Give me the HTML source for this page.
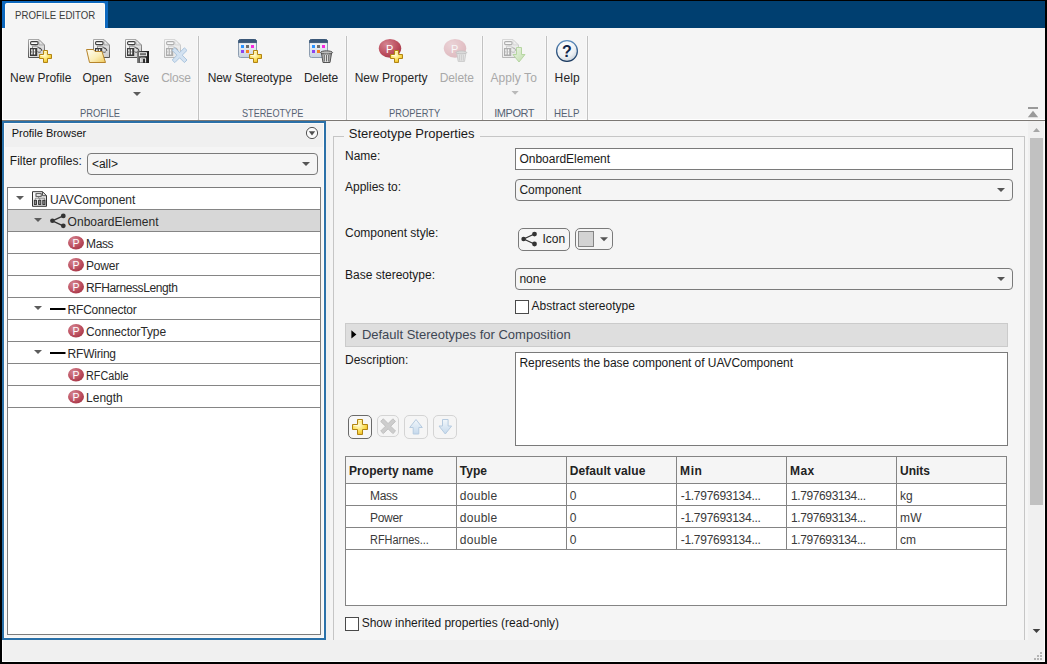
<!DOCTYPE html>
<html lang="en">
<head>
<meta charset="utf-8">
<title>Profile Editor</title>
<style>
html,body{margin:0;padding:0;}
body{width:1047px;height:664px;position:relative;overflow:hidden;background:#f0f0f0;font-family:"Liberation Sans",sans-serif;}
.a{position:absolute;box-sizing:border-box;}
.t{position:absolute;white-space:nowrap;font-family:"Liberation Sans",sans-serif;}
svg{position:absolute;overflow:visible;}
.sep{position:absolute;width:1px;top:36px;height:84px;background:#c2c2c2;box-shadow:-1px 0 #f9f9f9,1px 0 #f9f9f9;}
.row{position:absolute;left:8px;width:312px;height:1px;background:#858585;}
.combo{position:absolute;box-sizing:border-box;border:1px solid #7a7a7a;border-radius:4px;background:#f5f5f5;}
.hl{position:absolute;height:1px;background:#848484;}
.vl{position:absolute;width:1px;background:#848484;}
</style>
</head>
<body>
<!-- window frame -->
<div class="a" style="left:0;top:0;width:1047px;height:1px;background:#000"></div>
<div class="a" style="left:0;top:0;width:2px;height:664px;background:#000"></div>
<div class="a" style="left:1045px;top:0;width:2px;height:664px;background:#000"></div>
<div class="a" style="left:0;top:662px;width:1047px;height:2px;background:#000"></div>
<!-- title / tab bar -->
<div class="a" style="left:2px;top:1px;width:1043px;height:27px;background:#003f70"></div>
<div class="a" style="left:2px;top:1px;width:106px;height:27px;background:#0d68be"></div>
<div class="a" style="left:5px;top:3px;width:100px;height:25px;background:#f5f5f5;border:1px solid #fffdf8;border-bottom:none;border-radius:2px 2px 0 0"></div>
<!-- toolstrip -->
<div class="a" style="left:2px;top:28px;width:1043px;height:92px;background:#f5f5f5;border-left:1px solid #fff;border-bottom:1px solid #fff"></div>
<div class="a" style="left:2px;top:120px;width:1043px;height:1px;background:#7c7874"></div>
<div class="sep" style="left:198px"></div>
<div class="sep" style="left:346px"></div>
<div class="sep" style="left:482px"></div>
<div class="sep" style="left:546px"></div>
<div class="sep" style="left:587px"></div>
<!-- left panel -->
<div class="a" style="left:2px;top:121px;width:324px;height:519px;border:2px solid #2a70a8;background:#f5f5f5;box-shadow:inset 0 0 0 1px #fcfaf8"></div>
<div class="a" style="left:5px;top:124px;width:318px;height:23px;background:#f0f0f0"></div>
<div class="combo" style="left:87px;top:153px;width:231px;height:22px"></div>
<div class="a" style="left:7px;top:187px;width:314px;height:448px;background:#fff;border:1px solid #7c7c7c"></div>
<div class="a" style="left:8px;top:210px;width:312px;height:21px;background:#d7d7d7"></div>
<div class="row" style="top:209px"></div><div class="row" style="top:231px"></div><div class="row" style="top:253px"></div>
<div class="row" style="top:275px"></div><div class="row" style="top:297px"></div><div class="row" style="top:319px"></div>
<div class="row" style="top:341px"></div><div class="row" style="top:363px"></div><div class="row" style="top:385px"></div>
<div class="row" style="top:407px"></div>
<!-- right panel -->
<div class="a" style="left:330px;top:121px;width:715px;height:519px;background:#f5f5f5"></div>
<div class="a" style="left:1028px;top:121px;width:17px;height:519px;background:#f0f0f0;border-right:1px solid #fdfdfd"></div>
<div class="a" style="left:1030px;top:138px;width:13px;height:367px;background:#c1c1c1"></div>
<!-- group box -->
<div class="a" style="left:333px;top:136px;width:692px;height:520px;border:1px solid #c6c6c6;border-bottom:none"></div>
<div class="a" style="left:344px;top:130px;width:136px;height:12px;background:#f5f5f5"></div>
<div class="a" style="left:330px;top:640px;width:715px;height:22px;background:#f0f0f0"></div>
<!-- inputs -->
<div class="a" style="left:515px;top:148px;width:498px;height:22px;background:#fff;border:1px solid #7a7a7a"></div>
<div class="combo" style="left:515px;top:179px;width:498px;height:22px"></div>
<div class="combo" style="left:518px;top:228px;width:52px;height:23px;border-radius:5px"></div>
<div class="combo" style="left:575px;top:228px;width:38px;height:22px;border-radius:5px"></div>
<div class="a" style="left:578px;top:231px;width:16px;height:16px;background:#d3d3d3;border:1px solid #858585"></div>
<div class="combo" style="left:515px;top:268px;width:498px;height:22px"></div>
<div class="a" style="left:515px;top:300px;width:14px;height:14px;background:#fff;border:1px solid #4a4a4a"></div>
<div class="a" style="left:345px;top:323px;width:663px;height:24px;background:#dedede;border:1px solid #cbcbcb"></div>
<div class="a" style="left:515px;top:352px;width:493px;height:94px;background:#fff;border:1px solid #7a7a7a"></div>
<!-- small buttons -->
<div class="combo" style="left:348px;top:415px;width:24px;height:24px;border-color:#6a6a6a;border-radius:5px;background:#f7f7f7"></div>
<div class="combo" style="left:377px;top:415px;width:22px;height:22px;border-color:#d4d4d4;border-radius:5px"></div>
<div class="combo" style="left:404px;top:415px;width:24px;height:24px;border-color:#d4d4d4;border-radius:5px"></div>
<div class="combo" style="left:433px;top:415px;width:24px;height:24px;border-color:#d4d4d4;border-radius:5px"></div>
<!-- table -->
<div class="a" style="left:345px;top:456px;width:662px;height:150px;background:#fff;border:1px solid #848484"></div>
<div class="a" style="left:346px;top:457px;width:660px;height:26px;background:#f5f5f5"></div>
<div class="hl" style="left:346px;width:660px;top:483px"></div>
<div class="hl" style="left:346px;width:660px;top:505px"></div>
<div class="hl" style="left:346px;width:660px;top:527px"></div>
<div class="hl" style="left:346px;width:660px;top:549px"></div>
<div class="vl" style="left:456px;top:457px;height:93px"></div>
<div class="vl" style="left:566px;top:457px;height:93px"></div>
<div class="vl" style="left:676px;top:457px;height:93px"></div>
<div class="vl" style="left:786px;top:457px;height:93px"></div>
<div class="vl" style="left:896px;top:457px;height:93px"></div>
<div class="a" style="left:345px;top:617px;width:14px;height:14px;background:#fff;border:1px solid #4a4a4a"></div>
<div class="a" style="left:2px;top:661px;width:1043px;height:1px;background:#fcfcfc"></div>
<div class="a" style="left:1044px;top:121px;width:1px;height:541px;background:#fcfcfc"></div>
<div class="a" style="left:2px;top:640px;width:1px;height:22px;background:#fcfcfc"></div>
<svg width="1047" height="664" viewBox="0 0 1047 664" style="left:0;top:0">
<defs>
<linearGradient id="gdoc" x1="0" y1="0" x2="1" y2="1"><stop offset="0" stop-color="#fdfdfd"/><stop offset="1" stop-color="#c9c9c9"/></linearGradient>
<linearGradient id="gdocs" x1="0" y1="0" x2="0" y2="1"><stop offset="0" stop-color="#a8a8a8"/><stop offset="1" stop-color="#555"/></linearGradient>
<linearGradient id="gfoldc" x1="0" y1="0" x2="0" y2="1"><stop offset="0" stop-color="#ffffff"/><stop offset="1" stop-color="#d2d2d2"/></linearGradient>
<linearGradient id="gflop" x1="0" y1="0" x2="1" y2="0"><stop offset="0" stop-color="#8a8a8a"/><stop offset="0.35" stop-color="#3a3a3a"/><stop offset="1" stop-color="#1c1c1c"/></linearGradient>
<radialGradient id="gplusr" cx="0.42" cy="0.38" r="0.75"><stop offset="0" stop-color="#fffbd8"/><stop offset="0.55" stop-color="#fbdf55"/><stop offset="1" stop-color="#e7a50e"/></radialGradient>
<linearGradient id="ggreen" x1="0" y1="0" x2="1" y2="1"><stop offset="0" stop-color="#eef6e8"/><stop offset="1" stop-color="#bfdcab"/></linearGradient>
<linearGradient id="ghs" x1="0" y1="0" x2="0" y2="1"><stop offset="0" stop-color="#5f8fc0"/><stop offset="1" stop-color="#17365c"/></linearGradient>
<linearGradient id="gdoc2" x1="0" y1="0" x2="1" y2="1"><stop offset="0" stop-color="#ffffff"/><stop offset="1" stop-color="#d8d8d8"/></linearGradient>
<linearGradient id="gplus" x1="0" y1="0" x2="0" y2="1"><stop offset="0" stop-color="#fff8c0"/><stop offset="0.5" stop-color="#fbe15a"/><stop offset="1" stop-color="#eeb312"/></linearGradient>
<linearGradient id="gfold" x1="0" y1="0" x2="1" y2="1"><stop offset="0" stop-color="#fffef4"/><stop offset="0.55" stop-color="#fbeeb8"/><stop offset="1" stop-color="#efc95a"/></linearGradient>
<linearGradient id="gwin" x1="0" y1="0" x2="0" y2="1"><stop offset="0" stop-color="#ffffff"/><stop offset="1" stop-color="#c7d2df"/></linearGradient>
<radialGradient id="gred" cx="0.35" cy="0.3" r="0.8"><stop offset="0" stop-color="#d48692"/><stop offset="0.6" stop-color="#bd5060"/><stop offset="1" stop-color="#a23344"/></radialGradient>
<radialGradient id="ghelp" cx="0.4" cy="0.3" r="0.8"><stop offset="0" stop-color="#ffffff"/><stop offset="0.6" stop-color="#eef1f4"/><stop offset="1" stop-color="#bcc6d0"/></radialGradient>
<linearGradient id="gtrash" x1="0" y1="0" x2="1" y2="0"><stop offset="0" stop-color="#9a9a9a"/><stop offset="0.5" stop-color="#f2f2f2"/><stop offset="1" stop-color="#8a8a8a"/></linearGradient>
<linearGradient id="garr" x1="0" y1="0" x2="0" y2="1"><stop offset="0" stop-color="#f2f7fb"/><stop offset="1" stop-color="#c5d9ec"/></linearGradient>
<g id="pdoc">
 <path d="M0.5 0.5H11L16.5 6V18.5H0.5Z" fill="url(#gdoc)" stroke="url(#gdocs)"/>
 <path d="M11 0.8V6H16.2Z" fill="url(#gfoldc)" stroke="#9a9a9a" stroke-width="0.7" stroke-linejoin="round"/>
 <rect x="2.6" y="2.6" width="7.4" height="3" rx="1" fill="#fff" stroke="#3e3e3e" stroke-width="1.1"/>
 <path d="M7.2 6v1M4.5 9V7.2H10.5" stroke="#8a8a8a" fill="none" stroke-width="0.9"/>
 <rect x="2" y="9" width="7.2" height="8" fill="#3a3a3a"/>
 <path d="M3.9 10.3v5.3M6.5 10.3v5.3" stroke="#fff" fill="none" stroke-width="1.4"/>
 <path d="M3 12.95h1.2M5.6 12.95h1.2" stroke="#3a3a3a" fill="none" stroke-width="0.7"/>
 <path d="M9.6 9.2c1.6-0.9 3.4 0.3 4.2 2.6" stroke="#444" fill="none" stroke-width="1.5"/>
 <path d="M10 9.6c1.4-0.4 2.6 0.5 3.2 2.2" stroke="#fff" fill="none" stroke-width="0.7" stroke-dasharray="1.2 0.8"/>
 <path d="M9.5 12.6c1 0.9 2.3 0.9 3.3 0.2" stroke="#555" fill="none" stroke-width="1"/>
</g>
<g id="plus13">
 <path d="M4.5 0.5H8.5V4.5H12.5V8.5H8.5V12.5H4.5V8.5H0.5V4.5H4.5Z" fill="url(#gplusr)" stroke="#b08414" stroke-linejoin="round"/>
 <path d="M5.5 1.6H7.4M1.6 5.5H4.6" stroke="#fffde0" fill="none"/>
</g>
<g id="win19">
 <rect x="0.5" y="0.5" width="18" height="18" rx="2" fill="url(#gwin)" stroke="#8d9db0"/>
 <path d="M0.5 3.6V2.5a2 2 0 0 1 2-2h14a2 2 0 0 1 2 2V3.6Z" fill="#3b5878" stroke="#3b5878"/>
 <rect x="3" y="6" width="3" height="3" fill="#2a92ff"/>
 <rect x="8" y="6" width="3" height="3" fill="#6e6e6e"/>
 <rect x="13" y="6" width="3" height="3" fill="#f52ae0"/>
 <rect x="3" y="11" width="3" height="3" fill="#8c44f0"/>
 <rect x="8" y="11" width="3" height="3" fill="#f5821f"/>
</g>
<g id="trash">
 <path d="M1.5 4.5L3 13.5H10L11.5 4.5Z" fill="url(#gtrash)" stroke="#555"/>
 <path d="M0.5 3.8C0.5 1.2 12.5 1.2 12.5 3.8C12.5 5.4 0.5 5.4 0.5 3.8Z" fill="#bdbdbd" stroke="#4e4e4e"/>
 <path d="M4.3 6v6.5M6.5 6v6.5M8.7 6v6.5" stroke="#5a5a5a" stroke-width="0.9" fill="none"/>
</g>
<g id="share">
 <path d="M2.6 7.6L13.4 2.6M2.6 7.6L13.4 12.6" stroke="#333" stroke-width="1.3" fill="none"/>
 <circle cx="2.6" cy="7.6" r="2.3" fill="#333"/><circle cx="13.5" cy="2.7" r="2.4" fill="#333"/><circle cx="13.5" cy="12.6" r="2.4" fill="#333"/>
</g>
<g id="pico">
 <ellipse cx="8" cy="6.8" rx="8" ry="6.8" fill="url(#gred)"/>
 <text x="8.1" y="10.6" font-family="Liberation Sans, sans-serif" font-size="10.5" fill="#fff" text-anchor="middle">P</text>
</g>
<path id="dn8" d="M0 0H8L4 4Z"/>
</defs>

<!-- New Profile -->
<use href="#pdoc" x="28" y="39"/>
<use href="#plus13" x="39" y="50"/>
<!-- Open -->
<use href="#pdoc" x="93" y="39"/>
<path d="M86.5 49.5H93.5L95 51.5H102L105.5 62.5H89.5Z" fill="url(#gfold)" stroke="#b6842c" stroke-linejoin="round"/>
<!-- Save -->
<use href="#pdoc" x="125" y="39"/>
<g transform="translate(137,51)">
 <rect x="0" y="0" width="12" height="12" fill="url(#gflop)"/>
 <rect x="2.5" y="1.7" width="7" height="3" fill="#6e6e6e" stroke="#f2f2f2" stroke-width="0.9"/>
 <path d="M3.6 11.5V7.1H8.6V11.5" fill="none" stroke="#f4f4f4" stroke-width="1"/>
 <rect x="4.2" y="7.7" width="1.6" height="3.8" fill="#f4f4f4"/>
</g>
<!-- Close (disabled) -->
<g opacity="0.38"><use href="#pdoc" x="164" y="39"/></g>
<g transform="translate(172,47)">
 <path d="M2.8 0.8L7.6 5.6L12.4 0.8L15 3.4L10.2 8.2L15 13L12.4 15.6L7.6 10.8L2.8 15.6L0.2 13L5 8.2L0.2 3.4Z" fill="#d3e2f1" stroke="#abc5de" stroke-linejoin="round"/>
</g>
<!-- New Stereotype -->
<use href="#win19" x="238" y="39"/>
<use href="#plus13" x="249" y="50"/>
<!-- Delete stereotype -->
<use href="#win19" x="309" y="39"/>
<use href="#trash" x="320" y="49"/>
<!-- New Property -->
<ellipse cx="390" cy="48.3" rx="11.2" ry="9.4" fill="url(#gred)"/>
<text x="389.6" y="52.6" font-family="Liberation Sans, sans-serif" font-size="11" fill="#fff" text-anchor="middle">P</text>
<use href="#plus13" x="390" y="50"/>
<!-- Delete property (disabled) -->
<g opacity="0.3">
<ellipse cx="455" cy="48.3" rx="11.2" ry="9.4" fill="url(#gred)"/>
<text x="454.6" y="52.6" font-family="Liberation Sans, sans-serif" font-size="11" fill="#fff" text-anchor="middle">P</text>
</g>
<g transform="translate(455.5,49.3) scale(0.9)">
 <path d="M1.5 4.5L3 13.5H10L11.5 4.5Z" fill="#e4e4e4" stroke="#c9c9c9"/>
 <path d="M0.5 3.8C0.5 1.2 12.5 1.2 12.5 3.8C12.5 5.4 0.5 5.4 0.5 3.8Z" fill="#dadada" stroke="#c2c2c2"/>
 <path d="M4.3 6v6.5M6.5 6v6.5M8.7 6v6.5" stroke="#c6c6c6" stroke-width="0.9" fill="none"/>
</g>
<!-- Apply To (disabled) -->
<g opacity="0.38"><use href="#pdoc" x="502" y="39"/></g>
<path d="M516.5 47.5H521.5V54.5H525L519 62L513 54.5H516.5Z" fill="url(#ggreen)" stroke="#b6d6a2" stroke-linejoin="round"/>
<!-- Help -->
<circle cx="567" cy="51" r="10.4" fill="url(#ghelp)" stroke="url(#ghs)" stroke-width="1.3"/>
<text x="567" y="56.6" font-family="Liberation Sans, sans-serif" font-size="16" font-weight="700" fill="#13264a" text-anchor="middle">?</text>
<!-- dropdown arrows under Save / Apply To -->
<use href="#dn8" x="133" y="92" fill="#5c5c5c"/>
<path d="M511.5 91H518.7L515.1 94.8Z" fill="#b9b9b9"/>
<!-- collapse toolstrip -->
<rect x="1028" y="107" width="10" height="2" fill="#9a9a9a"/>
<path d="M1027.8 117.2H1038.2L1033 110.8Z" fill="#9a9a9a"/>
<!-- panel header menu -->
<circle cx="312" cy="133" r="5.6" fill="#fafafa" stroke="#555" stroke-width="1"/>
<path d="M308.8 131.2H315.2L312 135.4Z" fill="#505050"/>
<!-- combo arrows -->
<use href="#dn8" x="302" y="162" fill="#555"/>
<use href="#dn8" x="997" y="188" fill="#555"/>
<use href="#dn8" x="997" y="277" fill="#555"/>
<use href="#dn8" x="600" y="237.3" fill="#555"/>
<!-- tree -->
<use href="#dn8" x="16" y="196" fill="#5c5c5c"/>
<use href="#dn8" x="34" y="218" fill="#5c5c5c"/>
<use href="#dn8" x="34" y="306" fill="#5c5c5c"/>
<use href="#dn8" x="34" y="350" fill="#5c5c5c"/>
<g transform="translate(32,191.2)">
 <path d="M0.5 0.5H10.5L14.5 4.5V15.1H0.5Z" fill="url(#gdoc2)" stroke="#333"/>
 <path d="M10.5 0.5V4.5H14.5" fill="none" stroke="#444" stroke-width="0.9"/>
 <rect x="4" y="2.5" width="5.2" height="2.6" fill="#fff" stroke="#3a3a3a" stroke-width="0.9"/>
 <path d="M6.6 5.4v1.6M3.3 8.6V7H12.6V8.6M7.7 7V8.6" stroke="#777" fill="none" stroke-width="0.8"/>
 <rect x="2.3" y="9.1" width="2.2" height="4.2" fill="#8a8a8a" stroke="#2e2e2e" stroke-width="0.9"/>
 <rect x="6.6" y="9.1" width="2.2" height="4.2" fill="#8a8a8a" stroke="#2e2e2e" stroke-width="0.9"/>
 <rect x="10.8" y="9.1" width="2.2" height="4.2" fill="#8a8a8a" stroke="#2e2e2e" stroke-width="0.9"/>
</g>
<use href="#share" x="49.8" y="213.2"/>
<use href="#pico" x="68" y="236"/>
<use href="#pico" x="68" y="258"/>
<use href="#pico" x="68" y="280"/>
<use href="#pico" x="68" y="324"/>
<use href="#pico" x="68" y="368"/>
<use href="#pico" x="68" y="390"/>
<rect x="50" y="308" width="15.5" height="2" fill="#000"/>
<rect x="50" y="352" width="15.5" height="2" fill="#000"/>
<!-- icon button -->
<use href="#share" x="521" y="231.4"/>
<!-- section arrow -->
<path d="M351.4 330.2V338.6L356.4 334.4Z" fill="#000"/>
<!-- small buttons -->
<g transform="translate(352,419)">
 <path d="M5.5 0.5H10.5V5.5H15.5V10.5H10.5V15.5H5.5V10.5H0.5V5.5H5.5Z" fill="url(#gplusr)" stroke="#b08414" stroke-linejoin="round"/>
 <path d="M6.6 1.7H9.4M1.7 6.6H5.6" stroke="#fffde0" fill="none"/>
</g>
<g transform="translate(380.5,418.4)">
 <path d="M2.8 0.4L7.6 5.2L12.4 0.4L15 3L10.2 7.8L15 12.6L12.4 15.2L7.6 10.4L2.8 15.2L0.2 12.6L5 7.8L0.2 3Z" fill="#cdcdcd" stroke="#c0c0c0" stroke-linejoin="round"/>
</g>
<path d="M416 419.5L422.3 427.5H418.8V434H413.2V427.5H409.7Z" fill="url(#garr)" stroke="#b6cbe0" stroke-linejoin="round"/>
<path d="M445.3 434L451.6 426H448.1V419.5H442.5V426H439Z" fill="url(#garr)" stroke="#b6cbe0" stroke-linejoin="round"/>
<!-- scrollbar arrows -->
<path d="M1033 132H1040L1036.5 128Z" fill="#a6a6a6"/>
<path d="M1032.7 629H1040.3L1036.5 633Z" fill="#404040"/>
<!-- resize grip -->
<g fill="#b4b4b4">
<rect x="1040" y="652" width="2" height="2"/>
<rect x="1037" y="655" width="2" height="2"/><rect x="1040" y="655" width="2" height="2"/>
<rect x="1034" y="658" width="2" height="2"/><rect x="1037" y="658" width="2" height="2"/><rect x="1040" y="658" width="2" height="2"/>
</g>
</svg>

<span class="t" id="t0" style="left:15.00px;top:8px;font-size:11px;line-height:14px;color:#3b3b3b;transform:scaleX(0.8767);transform-origin:0 0;">PROFILE EDITOR</span>
<span class="t" id="t1" style="left:10.10px;top:70px;font-size:12px;line-height:16px;color:#262626;">New Profile</span>
<span class="t" id="t2" style="left:82.40px;top:70px;font-size:12px;line-height:16px;color:#262626;letter-spacing:0.085px;">Open</span>
<span class="t" id="t3" style="left:123.90px;top:70px;font-size:12px;line-height:16px;color:#262626;transform:scaleX(0.9211);transform-origin:0 0;">Save</span>
<span class="t" id="t4" style="left:161.20px;top:70px;font-size:12px;line-height:16px;color:#a9a9a9;letter-spacing:-0.258px;">Close</span>
<span class="t" id="t5" style="left:207.70px;top:70px;font-size:12px;line-height:16px;color:#262626;letter-spacing:-0.078px;">New Stereotype</span>
<span class="t" id="t6" style="left:304.00px;top:70px;font-size:12px;line-height:16px;color:#262626;letter-spacing:-0.098px;">Delete</span>
<span class="t" id="t7" style="left:354.70px;top:70px;font-size:12px;line-height:16px;color:#262626;letter-spacing:0.016px;">New Property</span>
<span class="t" id="t8" style="left:439.70px;top:70px;font-size:12px;line-height:16px;color:#a9a9a9;letter-spacing:-0.098px;">Delete</span>
<span class="t" id="t9" style="left:490.40px;top:70px;font-size:12px;line-height:16px;color:#a9a9a9;letter-spacing:0.086px;">Apply To</span>
<span class="t" id="t10" style="left:554.60px;top:70px;font-size:12px;line-height:16px;color:#262626;letter-spacing:0.153px;">Help</span>
<span class="t" id="t11" style="left:80.30px;top:106px;font-size:11px;line-height:14px;color:#556273;transform:scaleX(0.8518);transform-origin:0 0;">PROFILE</span>
<span class="t" id="t12" style="left:242.10px;top:106px;font-size:11px;line-height:14px;color:#556273;transform:scaleX(0.8301);transform-origin:0 0;">STEREOTYPE</span>
<span class="t" id="t13" style="left:388.80px;top:106px;font-size:11px;line-height:14px;color:#556273;transform:scaleX(0.8473);transform-origin:0 0;">PROPERTY</span>
<span class="t" id="t14" style="left:494.20px;top:106px;font-size:11px;line-height:14px;color:#556273;letter-spacing:-0.446px;">IMPORT</span>
<span class="t" id="t15" style="left:554.40px;top:106px;font-size:11px;line-height:14px;color:#556273;transform:scaleX(0.8870);transform-origin:0 0;">HELP</span>
<span class="t" id="t16" style="left:11.70px;top:126px;font-size:11px;line-height:14px;color:#111;letter-spacing:-0.005px;">Profile Browser</span>
<span class="t" id="t17" style="left:9.80px;top:153px;font-size:12px;line-height:16px;color:#1a1a1a;">Filter profiles:</span>
<span class="t" id="t18" style="left:91.90px;top:156px;font-size:12px;line-height:16px;color:#1a1a1a;">&lt;all&gt;</span>
<span class="t" id="t19" style="left:50.10px;top:192px;font-size:12px;line-height:16px;color:#2a2a2a;letter-spacing:-0.061px;">UAVComponent</span>
<span class="t" id="t20" style="left:67.60px;top:214px;font-size:12px;line-height:16px;color:#2a2a2a;letter-spacing:0.019px;">OnboardElement</span>
<span class="t" id="t21" style="left:86.00px;top:236px;font-size:12px;line-height:16px;color:#2a2a2a;letter-spacing:-0.368px;">Mass</span>
<span class="t" id="t22" style="left:86.00px;top:258px;font-size:12px;line-height:16px;color:#2a2a2a;letter-spacing:-0.203px;">Power</span>
<span class="t" id="t23" style="left:86.00px;top:280px;font-size:12px;line-height:16px;color:#2a2a2a;letter-spacing:-0.386px;">RFHarnessLength</span>
<span class="t" id="t24" style="left:67.60px;top:302px;font-size:12px;line-height:16px;color:#2a2a2a;letter-spacing:-0.216px;">RFConnector</span>
<span class="t" id="t25" style="left:86.00px;top:324px;font-size:12px;line-height:16px;color:#2a2a2a;letter-spacing:-0.107px;">ConnectorType</span>
<span class="t" id="t26" style="left:67.60px;top:346px;font-size:12px;line-height:16px;color:#2a2a2a;letter-spacing:-0.225px;">RFWiring</span>
<span class="t" id="t27" style="left:86.00px;top:368px;font-size:12px;line-height:16px;color:#2a2a2a;transform:scaleX(0.8995);transform-origin:0 0;">RFCable</span>
<span class="t" id="t28" style="left:86.00px;top:390px;font-size:12px;line-height:16px;color:#2a2a2a;letter-spacing:0.016px;">Length</span>
<span class="t" id="t29" style="left:348.80px;top:125px;font-size:13px;line-height:17px;color:#1a1a1a;">Stereotype Properties</span>
<span class="t" id="t30" style="left:345.00px;top:148px;font-size:12px;line-height:16px;color:#1a1a1a;">Name:</span>
<span class="t" id="t31" style="left:345.00px;top:179px;font-size:12px;line-height:16px;color:#1a1a1a;">Applies to:</span>
<span class="t" id="t32" style="left:345.00px;top:225px;font-size:12px;line-height:16px;color:#1a1a1a;">Component style:</span>
<span class="t" id="t33" style="left:345.00px;top:267px;font-size:12px;line-height:16px;color:#1a1a1a;">Base stereotype:</span>
<span class="t" id="t34" style="left:345.00px;top:352px;font-size:12px;line-height:16px;color:#1a1a1a;">Description:</span>
<span class="t" id="t35" style="left:519.40px;top:151px;font-size:12px;line-height:16px;color:#1a1a1a;">OnboardElement</span>
<span class="t" id="t36" style="left:519.40px;top:182px;font-size:12px;line-height:16px;color:#1a1a1a;">Component</span>
<span class="t" id="t37" style="left:542.40px;top:231px;font-size:12px;line-height:16px;color:#1a1a1a;">Icon</span>
<span class="t" id="t38" style="left:519.40px;top:271px;font-size:12px;line-height:16px;color:#1a1a1a;">none</span>
<span class="t" id="t39" style="left:531.50px;top:298px;font-size:12px;line-height:16px;color:#1a1a1a;">Abstract stereotype</span>
<span class="t" id="t40" style="left:361.90px;top:326px;font-size:13px;line-height:17px;color:#3d4654;">Default Stereotypes for Composition</span>
<span class="t" id="t41" style="left:519.40px;top:355px;font-size:12px;line-height:16px;color:#1a1a1a;letter-spacing:-0.052px;">Represents the base component of UAVComponent</span>
<span class="t" id="t42" style="left:361.70px;top:615px;font-size:12px;line-height:16px;color:#1a1a1a;">Show inherited properties (read-only)</span>
<span class="t" id="t43" style="left:349.10px;top:463px;font-size:12px;line-height:16px;color:#222;font-weight:700;letter-spacing:0.021px;">Property name</span>
<span class="t" id="t44" style="left:459.80px;top:463px;font-size:12px;line-height:16px;color:#222;font-weight:700;">Type</span>
<span class="t" id="t45" style="left:569.70px;top:463px;font-size:12px;line-height:16px;color:#222;font-weight:700;letter-spacing:0.077px;">Default value</span>
<span class="t" id="t46" style="left:680.00px;top:463px;font-size:12px;line-height:16px;color:#222;font-weight:700;letter-spacing:0.643px;">Min</span>
<span class="t" id="t47" style="left:790.10px;top:463px;font-size:12px;line-height:16px;color:#222;font-weight:700;letter-spacing:0.419px;">Max</span>
<span class="t" id="t48" style="left:900.00px;top:463px;font-size:12px;line-height:16px;color:#222;font-weight:700;letter-spacing:-0.040px;">Units</span>
<span class="t" id="t49" style="left:370.00px;top:488px;font-size:12px;line-height:16px;color:#3a3a3a;letter-spacing:-0.293px;">Mass</span>
<span class="t" id="t50" style="left:459.80px;top:488px;font-size:12px;line-height:16px;color:#3a3a3a;letter-spacing:0.276px;">double</span>
<span class="t" id="t51" style="left:569.70px;top:488px;font-size:12px;line-height:16px;color:#3a3a3a;">0</span>
<span class="t" id="t52" style="left:680.70px;top:488px;font-size:12px;line-height:16px;color:#3a3a3a;letter-spacing:-0.279px;">-1.797693134...</span>
<span class="t" id="t53" style="left:790.90px;top:488px;font-size:12px;line-height:16px;color:#3a3a3a;letter-spacing:-0.370px;">1.797693134...</span>
<span class="t" id="t54" style="left:900.00px;top:488px;font-size:12px;line-height:16px;color:#3a3a3a;letter-spacing:-0.044px;">kg</span>
<span class="t" id="t55" style="left:370.00px;top:510px;font-size:12px;line-height:16px;color:#3a3a3a;letter-spacing:-0.303px;">Power</span>
<span class="t" id="t56" style="left:459.80px;top:510px;font-size:12px;line-height:16px;color:#3a3a3a;letter-spacing:0.276px;">double</span>
<span class="t" id="t57" style="left:569.70px;top:510px;font-size:12px;line-height:16px;color:#3a3a3a;">0</span>
<span class="t" id="t58" style="left:680.70px;top:510px;font-size:12px;line-height:16px;color:#3a3a3a;letter-spacing:-0.279px;">-1.797693134...</span>
<span class="t" id="t59" style="left:790.90px;top:510px;font-size:12px;line-height:16px;color:#3a3a3a;letter-spacing:-0.370px;">1.797693134...</span>
<span class="t" id="t60" style="left:900.00px;top:510px;font-size:12px;line-height:16px;color:#3a3a3a;letter-spacing:0.336px;">mW</span>
<span class="t" id="t61" style="left:370.00px;top:532px;font-size:12px;line-height:16px;color:#3a3a3a;transform:scaleX(0.9105);transform-origin:0 0;">RFHarnes...</span>
<span class="t" id="t62" style="left:459.80px;top:532px;font-size:12px;line-height:16px;color:#3a3a3a;letter-spacing:0.276px;">double</span>
<span class="t" id="t63" style="left:569.70px;top:532px;font-size:12px;line-height:16px;color:#3a3a3a;">0</span>
<span class="t" id="t64" style="left:680.70px;top:532px;font-size:12px;line-height:16px;color:#3a3a3a;letter-spacing:-0.279px;">-1.797693134...</span>
<span class="t" id="t65" style="left:790.90px;top:532px;font-size:12px;line-height:16px;color:#3a3a3a;letter-spacing:-0.370px;">1.797693134...</span>
<span class="t" id="t66" style="left:900.00px;top:532px;font-size:12px;line-height:16px;color:#3a3a3a;">cm</span>
</body>
</html>
